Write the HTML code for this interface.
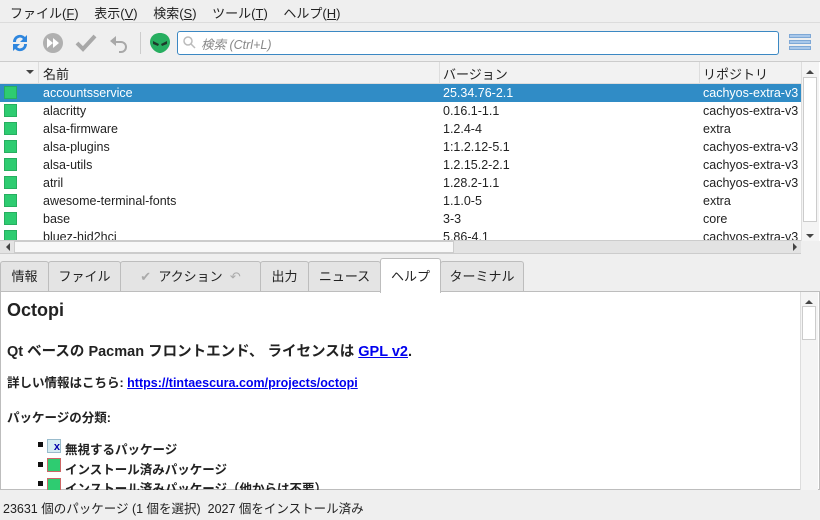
<!DOCTYPE html><html><head><meta charset="utf-8"><style>
*{box-sizing:border-box;margin:0;padding:0}
body{width:820px;height:520px;background:#efefef;font-family:"Liberation Sans","Noto Sans CJK JP",sans-serif;font-size:12.5px;color:#222;position:relative;overflow:hidden}
.a{position:absolute;white-space:nowrap}
.row{position:absolute;left:0;width:801px;height:18px;line-height:18px;white-space:nowrap}
.row span{position:absolute;white-space:nowrap}
.ic{position:absolute;left:4px;top:2px;width:13px;height:13px;background:#2ecc71;border:1px solid #27ae60}
.tab{position:absolute;top:261px;height:31px;line-height:30px;text-align:center;background:#e4e4e4;border:1px solid #bdbdbd;border-bottom:none;border-radius:3px 3px 0 0;font-size:13px}
</style></head><body>
<div class="a" style="left:10px;top:3px;font-size:13px;word-spacing:12px">ファイル(<u>F</u>) 表示(<u>V</u>) 検索(<u>S</u>) ツール(<u>T</u>) ヘルプ(<u>H</u>)</div>
<div class="a" style="left:0;top:22px;width:820px;height:1px;background:#dcdcdc"></div>
<svg class="a" style="left:8px;top:31px" width="24" height="24" viewBox="0 0 24 24"><path d="M5 11a7 7 0 0 1 12-5l2-2v7h-7l3-3a4 4 0 0 0-7 3z M19 13a7 7 0 0 1-12 5l-2 2v-7h7l-3 3a4 4 0 0 0 7-3z" fill="#2e86de"/></svg>
<svg class="a" style="left:42px;top:32px" width="22" height="22"><circle cx="11" cy="11" r="10" fill="#b0b0b0"/><path d="M5 6l6 5-6 5z M11 6l6 5-6 5z" fill="#fff"/></svg>
<svg class="a" style="left:75px;top:33px" width="22" height="20"><path d="M2 10l6 6L20 3" stroke="#a8a8a8" stroke-width="4" fill="none"/></svg>
<svg class="a" style="left:108px;top:33px" width="22" height="20"><path d="M8 3L2 8l6 5V10h5a4 4 0 0 1 0 8h-2v2h2a6 6 0 0 0 0-12H8z" fill="#a8a8a8"/></svg>
<div class="a" style="left:140px;top:32px;width:1px;height:22px;background:#ccc"></div>
<svg class="a" style="left:148px;top:31px" width="24" height="24"><path d="M12 2C5 2 2 7 2 11c0 6 6 11 10 11s10-5 10-11c0-4-3-9-10-9z" fill="#27ae60"/><path d="M5 10l6 3-1 2-5-2z M19 10l-6 3 1 2 5-2z" fill="#1d3a2a"/></svg>
<div class="a" style="left:177px;top:31px;width:602px;height:24px;background:#fff;border:1px solid #3b88c3;border-radius:3px"></div>
<svg class="a" style="left:182px;top:35px" width="14" height="14"><circle cx="6" cy="6" r="4" stroke="#bbb" stroke-width="1.5" fill="none"/><path d="M9 9l4 4" stroke="#bbb" stroke-width="1.5"/></svg>
<div class="a" style="left:201px;top:34px;color:#888;font-style:italic;font-size:12.5px">検索 (Ctrl+L)</div>
<div class="a" style="left:789px;top:34px;width:22px;height:4px;background:#a9c8ea;border:1px solid #7ea8d6"></div>
<div class="a" style="left:789px;top:40px;width:22px;height:4px;background:#a9c8ea;border:1px solid #7ea8d6"></div>
<div class="a" style="left:789px;top:46px;width:22px;height:4px;background:#a9c8ea;border:1px solid #7ea8d6"></div>
<div class="a" style="left:0;top:61px;width:820px;height:180px;background:#fff;border-top:1px solid #ccc"></div>
<div class="a" style="left:0;top:62px;width:801px;height:22px;background:#f2f2f2;border-bottom:1px solid #ddd"></div>
<div class="a" style="left:26px;top:70px;border:4px solid transparent;border-top:4px solid #444"></div>
<div class="a" style="left:38px;top:62px;width:1px;height:22px;background:#ddd"></div>
<div class="a" style="left:439px;top:62px;width:1px;height:22px;background:#ddd"></div>
<div class="a" style="left:699px;top:62px;width:1px;height:22px;background:#ddd"></div>
<div class="a" style="left:43px;top:64px;font-size:13px">名前</div><div class="a" style="left:443px;top:64px;font-size:13px">バージョン</div><div class="a" style="left:703px;top:64px;font-size:13px">リポジトリ</div>
<div class="row" style="top:84px;background:#308cc6;color:#fff"><i class="ic"></i><span style="left:43px">accountsservice</span><span style="left:443px">25.34.76-2.1</span><span style="left:703px">cachyos-extra-v3</span></div>
<div class="row" style="top:102px"><i class="ic"></i><span style="left:43px">alacritty</span><span style="left:443px">0.16.1-1.1</span><span style="left:703px">cachyos-extra-v3</span></div>
<div class="row" style="top:120px"><i class="ic"></i><span style="left:43px">alsa-firmware</span><span style="left:443px">1.2.4-4</span><span style="left:703px">extra</span></div>
<div class="row" style="top:138px"><i class="ic"></i><span style="left:43px">alsa-plugins</span><span style="left:443px">1:1.2.12-5.1</span><span style="left:703px">cachyos-extra-v3</span></div>
<div class="row" style="top:156px"><i class="ic"></i><span style="left:43px">alsa-utils</span><span style="left:443px">1.2.15.2-2.1</span><span style="left:703px">cachyos-extra-v3</span></div>
<div class="row" style="top:174px"><i class="ic"></i><span style="left:43px">atril</span><span style="left:443px">1.28.2-1.1</span><span style="left:703px">cachyos-extra-v3</span></div>
<div class="row" style="top:192px"><i class="ic"></i><span style="left:43px">awesome-terminal-fonts</span><span style="left:443px">1.1.0-5</span><span style="left:703px">extra</span></div>
<div class="row" style="top:210px"><i class="ic"></i><span style="left:43px">base</span><span style="left:443px">3-3</span><span style="left:703px">core</span></div>
<div class="row" style="top:228px;height:12px;overflow:hidden"><i class="ic"></i><span style="left:43px">bluez-hid2hci</span><span style="left:443px">5.86-4.1</span><span style="left:703px">cachyos-extra-v3</span></div>
<div class="a" style="left:801px;top:62px;width:18px;height:179px;background:#f4f4f4;border-left:1px solid #ddd"></div>
<div class="a" style="left:806px;top:66px;border:4px solid transparent;border-bottom:4px solid #444"></div>
<div class="a" style="left:803px;top:77px;width:14px;height:145px;background:#fff;border:1px solid #ccc"></div>
<div class="a" style="left:806px;top:234px;border:4px solid transparent;border-top:4px solid #444"></div>
<div class="a" style="left:0;top:240px;width:801px;height:14px;background:#e3e3e3;border-top:1px solid #ccc;border-bottom:1px solid #ccc"></div>
<div class="a" style="left:14px;top:241px;width:440px;height:12px;background:#f8f8f8;border:1px solid #ccc"></div>
<div class="a" style="left:2px;top:243px;border:4px solid transparent;border-right:4px solid #444"></div>
<div class="a" style="left:793px;top:243px;border:4px solid transparent;border-left:4px solid #444"></div>
<div class="tab" style="left:0;width:49px">情報</div>
<div class="tab" style="left:48px;width:73px">ファイル</div>
<div class="tab" style="left:120px;width:141px"><span style="color:#aaa">✔</span>&nbsp; アクション &nbsp;<span style="color:#aaa">↶</span></div>
<div class="tab" style="left:260px;width:49px">出力</div>
<div class="tab" style="left:308px;width:73px">ニュース</div>
<div class="tab" style="left:440px;width:84px">ターミナル</div>
<div class="a" style="left:0;top:291px;width:820px;height:199px;background:#fff;border:1px solid #bdbdbd"></div>
<div class="tab" style="left:380px;top:258px;width:61px;height:35px;line-height:36px;background:#fff;z-index:2">ヘルプ</div>
<div class="a" style="left:800px;top:292px;width:18px;height:198px;background:#f4f4f4;border-left:1px solid #ddd"></div>
<div class="a" style="left:805px;top:296px;border:4px solid transparent;border-bottom:4px solid #444"></div>
<div class="a" style="left:802px;top:306px;width:14px;height:34px;background:#fff;border:1px solid #ccc"></div>
<div class="a" style="left:7px;top:300px;font-size:18px;font-weight:bold">Octopi</div>
<div class="a" style="left:7px;top:340px;font-size:14.5px;font-weight:bold">Qt ベースの Pacman フロントエンド、 ライセンスは <span style="color:#00e;text-decoration:underline">GPL v2</span>.</div>
<div class="a" style="left:7px;top:372px;font-size:12.5px;font-weight:bold">詳しい情報はこちら: <span style="color:#00e;text-decoration:underline">https://tintaescura.com/projects/octopi</span></div>
<div class="a" style="left:7px;top:407px;font-size:12.5px;font-weight:bold">パッケージの分類:</div>
<div style="position:absolute;left:0;top:438px;width:790px;height:52px;overflow:hidden">
<div class="a" style="left:38px;top:4px;width:5px;height:5px;background:#111"></div>
<div class="a" style="left:47px;top:1px;width:14px;height:14px;background:#d6ecf2;border:1px solid #9bc;color:#00a;font-weight:bold;font-size:11px;line-height:14px;text-align:right">x</div>
<div class="a" style="left:65px;top:1px;font-weight:bold">無視するパッケージ</div>
<div class="a" style="left:38px;top:24px;width:5px;height:5px;background:#111"></div>
<div class="a" style="left:47px;top:20px;width:14px;height:14px;background:#2ecc71;border:1px solid #c66"></div>
<div class="a" style="left:65px;top:21px;font-weight:bold">インストール済みパッケージ</div>
<div class="a" style="left:38px;top:43px;width:5px;height:5px;background:#111"></div>
<div class="a" style="left:47px;top:40px;width:14px;height:14px;background:#2ecc71;border:1px solid #c66"></div>
<div class="a" style="left:65px;top:40px;font-weight:bold">インストール済みパッケージ（他からは不要）</div>
</div>
<div class="a" style="left:3px;top:498px;font-size:12.5px">23631 個のパッケージ (1 個を選択) &nbsp;2027 個をインストール済み</div>
</body></html>
